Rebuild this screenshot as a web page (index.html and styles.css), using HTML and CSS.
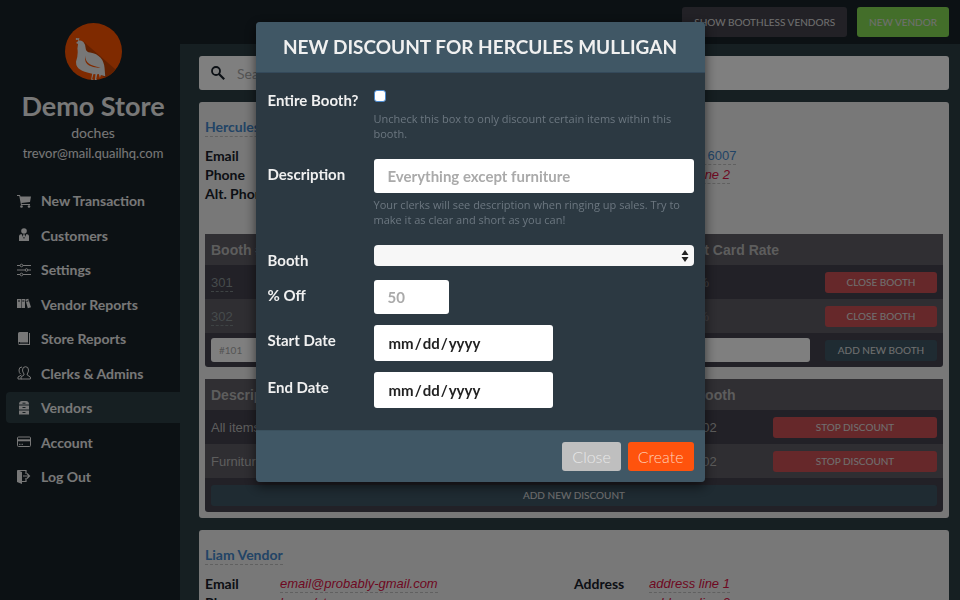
FILE: index.html
```
<!DOCTYPE html>
<html lang="en">
    <head>
        <meta charset="utf-8">
        <title>Vendors - Demo Store</title>

        <link rel="stylesheet" href="styles.css">
    </head>

    <body>
        <div class="page">
            <aside class="sidebar">
                <svg class="logo" viewBox="195 69 170 170">
                    <circle cx="280" cy="154" r="85" fill="#ff5400"/>
                    <path d="M250 124L346 208Q334 225 313 233L270 190Z" fill="#c94300"/>
                    <path d="M228 129L234 123Q243 118 251 127Q257 134 257 147Q259 155 270 157Q290 160 301 173Q311 184 313 203L315 228L302 224L299 233L296 221L291 222L288 237L293 240H284L286 222L280 221L276 235L280 238H273L276 220Q250 216 240 208Q227 200 228 184Q235 163 232 145L234 132Z" fill="#eee"/>
                    <path d="M255 166Q252 187 267 196Q281 204 301 202Q276 198 266 190Q255 181 255 166Z" fill="#ff5400"/>
                    <path d="M236 124Q237 116 231 117" fill="none" stroke="#eee" stroke-width="3"/>
                    <circle cx="230" cy="117" r="3" fill="#eee"/>
                    <circle cx="236" cy="116" r="2" fill="#eee"/>
                </svg>
                <h1 class="store-name">Demo Store</h1>
                <p class="user-name">doches</p>
                <p class="user-email">trevor@mail.quailhq.com</p>

                <nav class="menu">
                    <a class="menu-item" href="#">
                        <svg class="menu-icon" viewBox="0 0 14 14"><path d="M0 1h3l.5 1.500H14l-1 5.500-8.500 1 .3 1H13v1H4L2.300 2H0z"/><circle cx="4.500" cy="12.500" r="1.300"/><circle cx="12" cy="12.500" r="1.300"/></svg>
                        New Transaction
                    </a>
                    <a class="menu-item" href="#">
                        <svg class="menu-icon" viewBox="0 0 14 14"><circle cx="7" cy="3" r="2.800"/><path d="M2 13V8q0-1.500 2.500-2L7 11l2.500-5Q12 6.500 12 8v5z"/><path d="M6.300 6.300h1.400L8 8.500 7 10 6 8.500z"/></svg>
                        Customers
                    </a>
                    <a class="menu-item" href="#">
                        <svg class="menu-icon line" viewBox="0 0 14 14"><path d="M0 2.500h3M6 2.500h8M0 7h8M11 7h3M0 11.500h3M6 11.500h8"/><circle cx="4.500" cy="2.500" r="1.300"/><circle cx="9.500" cy="7" r="1.300"/><circle cx="4.500" cy="11.500" r="1.300"/></svg>
                        Settings
                    </a>
                    <a class="menu-item" href="#">
                        <svg class="menu-icon" viewBox="0 0 14 14"><path d="M0 2h4v9H0zM4.500 2H8v9H4.500zM8.300 2.600l3-.9 2.700 8.500-3.200 1z"/><path d="M1 4h2M5.300 4h2M9.500 4.400l2-.6" stroke="#18212a" fill="none"/></svg>
                        Vendor Reports
                    </a>
                    <a class="menu-item" href="#">
                        <svg class="menu-icon" viewBox="0 0 14 14"><path d="M2.500 0H11v10H2.500q-1 .2-1 1t1 1H12V1h1v12H2.500Q1 13 1 11V1.500Q1 .2 2.500 0z"/><path d="M3 10.500h8v.8H3z"/></svg>
                        Store Reports
                    </a>
                    <a class="menu-item" href="#">
                        <svg class="menu-icon line" viewBox="0 0 14 14"><path d="M4.500 9L1 11v2h3.500M5 1Q2 1 2 4t1.500 4"/><path d="M8.500.7q3 0 3 3.300 0 2-1.300 4v1l3.200 2v2H4v-2l3-2V8Q5.500 6 5.500 4q0-3.300 3-3.300z"/></svg>
                        Clerks &amp; Admins
                    </a>
                    <a class="menu-item active" href="#">
                        <svg class="menu-icon" viewBox="0 0 14 14"><path d="M2 3.500Q2 0 5 0h4q3 0 3 3.500zM2 4.500h10v4H2zM2 9.500h10v4H2z"/><path d="M5.500 2.200h3M5.500 6.500h3M5.500 11.500h3" stroke="#2c3e44"/></svg>
                        Vendors
                    </a>
                    <a class="menu-item" href="#">
                        <svg class="menu-icon line" viewBox="0 0 14 14"><rect x=".5" y="2" width="13" height="9.500" rx="1"/><path d="M1 5.300h12" stroke-width="2"/><path d="M2 9.300h1.500M4.500 9.300H6"/></svg>
                        Account
                    </a>
                    <a class="menu-item" href="#">
                        <svg class="menu-icon" viewBox="0 0 14 14"><path d="M0 0l5 2v12l-5-2z"/><path d="M1 .5h8V4M5 11.500h4V8M6 6h6M10 3.500L12.500 6 10 8.500" fill="none" stroke="#f0f0f0" stroke-width="1.200"/></svg>
                        Log Out
                    </a>
                </nav>
            </aside>

            <main class="main">
                <header class="topbar">
                    <button class="btn dark">SHOW BOOTHLESS VENDORS</button>
                    <button class="btn green">NEW VENDOR</button>
                </header>

                <div class="content">
                    <div class="search">
                        <svg class="search-icon" viewBox="0 0 14 14"><circle cx="5" cy="5" r="4" fill="none" stroke="#18212a" stroke-width="1.800"/><path d="M8 8l5.200 5.200" stroke="#18212a" stroke-width="2.200"/></svg>
                        <input class="search-input" type="text" aria-label="Search vendors" placeholder="Search for a vendor">
                    </div>

                    <section class="vendor">
                        <a class="vendor-name" href="#">Hercules Mulligan</a>
                        <div class="details">
                            <dl class="detail-list">
                                <dt>Email</dt><dd><a class="edit" href="#">hercules@mulligan.com</a></dd>
                                <dt>Phone</dt><dd><a class="edit empty" href="#">phone</a></dd>
                                <dt>Alt. Phone</dt><dd><a class="edit empty" href="#">alt. phone</a></dd>
                            </dl>
                            <dl class="detail-list">
                                <dt>Address</dt><dd><a class="edit" href="#">1 Main St 6007</a></dd>
                                <dt></dt><dd><a class="edit empty" href="#">address line 2</a></dd>
                            </dl>
                        </div>

                        <table class="grid booths">
                            <colgroup><col class="col-booth"><col class="col-rent"><col class="col-rate"><col><col class="col-close"></colgroup>
                            <tr><th>Booth #</th><th>Rent</th><th>Rate</th><th>Credit Card Rate</th><th></th></tr>
                            <tr>
                                <td><a class="edit muted" href="#">301</a></td><td>$100</td><td>10 %</td><td class="dim">2.00 %</td>
                                <td><button class="btn small red">CLOSE BOOTH</button></td>
                            </tr>
                            <tr>
                                <td><a class="edit muted" href="#">302</a></td><td>$100</td><td>10 %</td><td class="dim">2.00 %</td>
                                <td><button class="btn small red">CLOSE BOOTH</button></td>
                            </tr>
                            <tr>
                                <td><input class="cell-input" type="text" aria-label="Booth number" placeholder="#101"></td>
                                <td><input class="cell-input" type="text" aria-label="Rent"></td>
                                <td><input class="cell-input" type="text" aria-label="Rate"></td>
                                <td><input class="cell-input" type="text" aria-label="Credit card rate"></td>
                                <td><button class="btn small teal">ADD NEW BOOTH</button></td>
                            </tr>
                        </table>

                        <table class="grid discounts">
                            <colgroup><col><col class="col-where"><col class="col-stop"></colgroup>
                            <tr><th>Description</th><th>Booth</th><th></th></tr>
                            <tr><td>All items</td><td>302</td><td><button class="btn small red">STOP DISCOUNT</button></td></tr>
                            <tr><td>Furniture</td><td>302</td><td><button class="btn small red">STOP DISCOUNT</button></td></tr>
                            <tr><td colspan="3"><button class="btn small teal">ADD NEW DISCOUNT</button></td></tr>
                        </table>
                    </section>

                    <section class="vendor">
                        <a class="vendor-name" href="#">Liam Vendor</a>
                        <div class="details">
                            <dl class="detail-list">
                                <dt>Email</dt><dd><a class="edit empty" href="#">email@probably-gmail.com</a></dd>
                                <dt>Phone</dt><dd><a class="edit empty" href="#">home/store</a></dd>
                            </dl>
                            <dl class="detail-list">
                                <dt>Address</dt><dd><a class="edit empty" href="#">address line 1</a></dd>
                                <dt></dt><dd><a class="edit empty" href="#">address line 2</a></dd>
                            </dl>
                        </div>
                    </section>
                </div>
            </main>
        </div>

        <div class="overlay">
            <form class="modal" role="dialog" aria-labelledby="modal-title">
                <header class="modal-header">
                    <h2 class="modal-title" id="modal-title">NEW DISCOUNT FOR HERCULES MULLIGAN</h2>
                </header>

                <div class="modal-body">
                    <div class="row">
                        <label for="entire">Entire Booth?</label>
                        <div>
                            <input class="check" id="entire" type="checkbox">
                            <p class="help">Uncheck this box to only discount certain items within this booth.</p>
                        </div>
                    </div>
                    <div class="row">
                        <label for="description">Description</label>
                        <div>
                            <input class="field" id="description" type="text" placeholder="Everything except furniture">
                            <p class="help">Your clerks will see description when ringing up sales. Try to make it as clear and short as you can!</p>
                        </div>
                    </div>
                    <div class="row">
                        <label for="booth">Booth</label>
                        <div class="select-wrap">
                            <select class="select" id="booth">
                                <option></option>
                                <option>301</option>
                                <option>302</option>
                            </select>
                            <svg class="arrows" viewBox="0 0 8 12"><path d="M4 0l3.500 5h-7zM4 12L.5 7h7z"/></svg>
                        </div>
                    </div>
                    <div class="row">
                        <label for="percent">% Off</label>
                        <input class="field percent" id="percent" type="text" placeholder="50">
                    </div>
                    <div class="row">
                        <label for="start">Start Date</label>
                        <input class="field date" id="start" type="date">
                    </div>
                    <div class="row">
                        <label for="end">End Date</label>
                        <input class="field date" id="end" type="date">
                    </div>
                </div>

                <footer class="modal-footer">
                    <button class="modal-btn" type="button">Close</button>
                    <button class="modal-btn create" type="button">Create</button>
                </footer>
            </form>
        </div>
    </body>
</html>
```
FILE: styles.css
```
* {
    box-sizing: border-box;
}

body {
    margin: 0;
    height: 100vh;
    overflow: hidden;

    font-family: "Liberation Sans", Arial, sans-serif;
    font-size: 13px;
    color: #18212a;
    background-color: #2c3e44;
}

a {
    text-decoration: none;
}

button, input, select {
    font-family: Lato, sans-serif;
}

.page {
    display: flex;
    height: 100vh;
    overflow: hidden;
}

/* sidebar */

.sidebar {
    width: 180px;
    flex: none;
    padding: 23px 0 0 6px;

    font-family: Lato, sans-serif;
    text-align: center;
    color: #f0f0f0;
    background-color: #182228;
}

.logo {
    display: block;
    width: 57px;
    height: 57px;
    margin: 0 auto;
}

.store-name {
    margin: 10px 0 0;
    font-size: 27px;
    line-height: 32px;
}

.user-name {
    margin: 1px 0 0;
    font-size: 14px;
    line-height: 20px;
}

.user-email {
    margin: 0;
    font-size: 13px;
    line-height: 20px;
}

.menu {
    display: flex;
    flex-direction: column;
    justify-content: space-between;
    min-height: 307px;
    margin-top: 22px;
}

.menu-item {
    display: flex;
    align-items: center;
    gap: 10px;
    padding-left: 11px;

    font-size: 14px;
    font-weight: bold;
    line-height: 31px;
    color: #f0f0f0;
    border-radius: 4px 0 0 4px;
}

.menu-item.active {
    background-color: #2c3e44;
}

.menu-icon {
    width: 14px;
    height: 14px;
    fill: #f0f0f0;
}

.menu-icon.line {
    fill: none;
    stroke: #f0f0f0;
}

/* top bar and search */

.main {
    flex: 1;
    min-width: 0;
}

.topbar {
    display: flex;
    justify-content: flex-end;
    gap: 10px;
    padding: 7px 11px;
    background-color: #182228;
}

.btn {
    height: 30px;
    padding: 0 12px;

    font-size: 10px;
    color: #e0e0e0;
    border: none;
    border-radius: 3px;
}

.btn.small {
    display: block;
    width: 100%;
    height: 21px;
    padding: 0;
}

.dark {
    background-color: #44424c;
}

.green {
    background-color: #86dc54;
}

.red {
    background-color: #cc5054;
}

.teal {
    background-color: #3e5664;
}

.content {
    display: flex;
    flex-direction: column;
    gap: 12px;
    padding: 12px 11px 12px 19px;
}

.search {
    display: flex;
    align-items: center;
    gap: 10px;
    height: 34px;
    padding-left: 12px;

    background-color: white;
    border-radius: 3px;
}

.search-icon {
    width: 14px;
    height: 14px;
}

.search-input {
    flex: 1;
    font-size: 14px;
    border: none;
    background: none;
}

/* vendor cards */

.vendor {
    padding: 16px 6px 6px;
    background-color: #f0f0f0;
    border-radius: 3px;
}

.vendor-name {
    display: inline-block;

    font-family: Lato, sans-serif;
    font-size: 14px;
    font-weight: bold;
    line-height: 18px;
    color: #4488cc;
    border-bottom: 1px dashed #c0c0c0;
}

.details {
    display: grid;
    grid-template-columns: 1fr 1fr;
    min-height: 88px;
    margin-top: 9px;
}

.detail-list {
    display: grid;
    grid-template-columns: 75px 1fr;
    grid-auto-rows: 19px;
    align-content: start;
    margin: 0;
    line-height: 19px;
}

.detail-list dt {
    font-family: Lato, sans-serif;
    font-size: 14px;
    font-weight: bold;
    white-space: nowrap;
}

.detail-list dd {
    margin: 0;
}

.edit {
    padding-bottom: 1px;
    color: #4488cc;
    border-bottom: 1px dashed #c0c0c0;
}

.edit.empty {
    font-style: italic;
    color: #dd1144;
}

.edit.muted {
    color: #8c9698;
    border-color: #7c8688;
}

.grid {
    width: 100%;
    table-layout: fixed;
    border-collapse: collapse;

    color: #bbb;
    background-color: #44424e;
    border-radius: 3px;
}

.grid + .grid {
    margin-top: 12px;
}

.grid th {
    height: 31px;
    padding: 0 6px;

    font-size: 14px;
    text-align: left;
    white-space: nowrap;
    background-color: #605e66;
}

.grid td {
    height: 34px;
    padding: 0 6px;
}

.grid tr:nth-child(3) td {
    background-color: #5e5c64;
}

.grid .dim {
    color: #88868c;
}

.booths td:last-child {
    padding-left: 9px;
}

.col-booth {
    width: 20%;
}

.col-rent, .col-rate {
    width: 21%;
}

.col-close {
    width: 127px;
}

.col-where {
    width: 78px;
}

.col-stop {
    width: 176px;
}

.cell-input {
    display: block;
    width: 100%;
    height: 24px;
    padding: 0 8px;

    font-size: 10px;
    background-color: white;
    border: none;
    border-radius: 3px;
}

/* discount dialog */

.overlay {
    position: fixed;
    inset: 0;
    display: flex;
    justify-content: center;
    align-items: flex-start;
    padding-top: 22px;
    background-color: rgba(0, 0, 0, 0.5);
}

.modal {
    width: 449px;

    font-family: Lato, sans-serif;
    color: #f0f0f0;
    background-color: #2c3942;
    border-radius: 4px;
    box-shadow: 0 4px 12px rgba(0, 0, 0, 0.6);
}

.modal-header {
    padding: 10px;

    text-align: center;
    background-color: #405765;
    border-bottom: 1px solid #34495a;
    border-radius: 4px 4px 0 0;
}

.modal-title {
    margin: 0;
    font-size: 19px;
    line-height: 30px;
}

.modal-body {
    display: flex;
    flex-direction: column;
    gap: 11px;
    padding: 12px 11px 22px 12px;
}

.row {
    display: grid;
    grid-template-columns: 106px 1fr;
    align-items: start;
}

.row label {
    padding-top: 6px;
    font-size: 15px;
    font-weight: bold;
    line-height: 18px;
}

.check {
    appearance: none;
    display: block;
    width: 12px;
    height: 12px;
    margin: 5px 0 9px;

    background-color: white;
    border: 1px solid #4a8ad0;
    border-radius: 3px;
}

.help {
    margin: 4px 0 7px;
    font-family: "Open Sans", sans-serif;
    font-size: 11px;
    line-height: 15px;
    color: #6c7780;
}

.field {
    display: block;
    width: 100%;
    height: 34px;
    padding: 0 14px;

    font-size: 15px;
    font-weight: bold;
    color: #222;
    background-color: white;
    border: none;
    border-radius: 3px;
}

::placeholder {
    color: #aaa;
}

.percent {
    width: 75px;
}

.date {
    width: 179px;
    height: 36px;
}

.date::-webkit-calendar-picker-indicator {
    display: none;
}

.select-wrap {
    display: grid;
    align-items: center;
}

.select {
    appearance: none;
    grid-area: 1 / 1;
    width: 100%;
    height: 21px;

    background-color: #f7f7f7;
    border: none;
    border-radius: 4px;
}

.arrows {
    grid-area: 1 / 1;
    justify-self: end;
    width: 8px;
    height: 12px;
    margin-right: 5px;
    fill: #222;
    pointer-events: none;
}

.modal-footer {
    display: flex;
    justify-content: flex-end;
    gap: 7px;
    padding: 11px;

    background-color: #405765;
    border-top: 1px solid #3a505d;
    border-radius: 0 0 4px 4px;
}

.modal-btn {
    height: 29px;
    padding: 0 10px;

    font-size: 16px;
    font-weight: 300;
    color: #e8e8e8;
    background-color: #bfbfbf;
    border: none;
    border-radius: 3px;
}

.create {
    color: #ffd0b8;
    background-color: #ff530d;
}
```
